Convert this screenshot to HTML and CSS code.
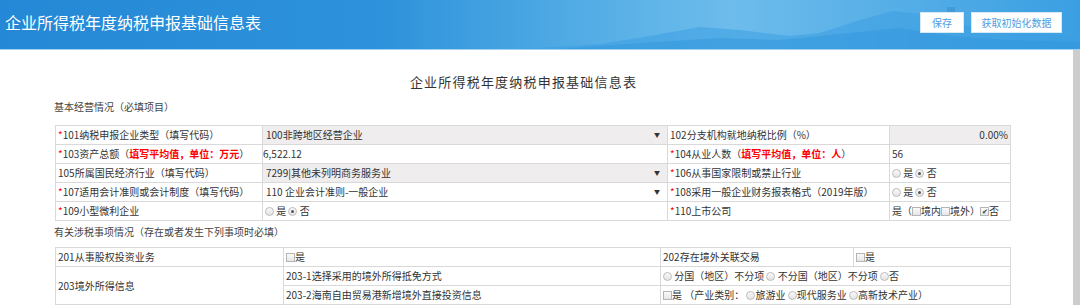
FILE: index.html
```html
<!DOCTYPE html>
<html lang="zh-CN">
<head>
    <meta charset="UTF-8">
    <title>企业所得税年度纳税申报基础信息表</title>
    <link rel="stylesheet" href="styles.css">
</head>
<body>
    <header class="topbar">
        <svg class="hills" viewBox="0 0 1080 49" preserveAspectRatio="none">
            <path d="M520 49 L600 44 L650 36 L700 27 L740 30 L790 36 L820 33 L860 20 L893 11 L920 14 L960 24 L1000 30 L1040 34 L1080 38 L1080 49 Z" fill="#3c9fe1" opacity="0.55"/>
            <path d="M560 49 L640 43 L720 38 L780 40 L840 34 L900 28 L950 36 L1010 40 L1080 42 L1080 49 Z" fill="#2f95dc" opacity="0.45"/>
            <rect x="947" y="7" width="8" height="6" fill="#3d8fcf" opacity="0.6"/>
        </svg>
        <h1 class="app-title">企业所得税年度纳税申报基础信息表</h1>
        <div class="actions">
            <button class="btn btn-save">保存</button>
            <button class="btn btn-init">获取初始化数据</button>
        </div>
    </header>

    <div class="body-wrap">
        <main class="content">
            <h2 class="form-title">企业所得税年度纳税申报基础信息表</h2>

            <div class="section-label first">基本经营情况（必填项目）</div>
            <table class="grid grid-basic">
                <colgroup>
                    <col style="width:207px">
                    <col style="width:405px">
                    <col style="width:222px">
                    <col style="width:121px">
                </colgroup>
                <tr>
                    <td><span class="req">*</span>101纳税申报企业类型（填写代码）</td>
                    <td class="select">100非跨地区经营企业<span class="arrow">▼</span></td>
                    <td>102分支机构就地纳税比例（%）</td>
                    <td class="readonly num">0.00%</td>
                </tr>
                <tr>
                    <td><span class="req">*</span>103资产总额（<b class="hint">填写平均值，单位：万元</b>）</td>
                    <td class="plain">6,522.12</td>
                    <td><span class="req">*</span>104从业人数（<b class="hint">填写平均值，单位：人</b>）</td>
                    <td>56</td>
                </tr>
                <tr>
                    <td>105所属国民经济行业（填写代码）</td>
                    <td class="select">7299|其他未列明商务服务业<span class="arrow">▼</span></td>
                    <td><span class="req">*</span>106从事国家限制或禁止行业</td>
                    <td><span class="radio"></span> 是 <span class="radio on"></span> 否</td>
                </tr>
                <tr>
                    <td><span class="req">*</span>107适用会计准则或会计制度（填写代码）</td>
                    <td class="select white">110 企业会计准则-一般企业<span class="arrow">▼</span></td>
                    <td><span class="req">*</span>108采用一般企业财务报表格式（2019年版）</td>
                    <td><span class="radio"></span> 是 <span class="radio on"></span> 否</td>
                </tr>
                <tr>
                    <td><span class="req">*</span>109小型微利企业</td>
                    <td><span class="radio"></span> 是 <span class="radio on"></span> 否</td>
                    <td><span class="req">*</span>110上市公司</td>
                    <td>是（<span class="check"></span>境内<span class="check"></span>境外）<span class="check on">✔</span>否</td>
                </tr>
            </table>

            <div class="section-label">有关涉税事项情况（存在或者发生下列事项时必填）</div>
            <table class="grid grid-tax">
                <colgroup>
                    <col style="width:228px">
                    <col style="width:377px">
                    <col style="width:193px">
                    <col style="width:157px">
                </colgroup>
                <tr>
                    <td>201从事股权投资业务</td>
                    <td><span class="check"></span>是</td>
                    <td>202存在境外关联交易</td>
                    <td><span class="check"></span>是</td>
                </tr>
                <tr>
                    <td rowspan="2">203境外所得信息</td>
                    <td>203-1选择采用的境外所得抵免方式</td>
                    <td colspan="2"><span class="radio"></span> 分国（地区）不分项 <span class="radio"></span> 不分国（地区）不分项 <span class="radio"></span>否</td>
                </tr>
                <tr>
                    <td>203-2海南自由贸易港新增境外直接投资信息</td>
                    <td colspan="2"><span class="check"></span>是 （产业类别： <span class="radio"></span>旅游业 <span class="radio"></span>现代服务业 <span class="radio"></span>高新技术产业）</td>
                </tr>
            </table>
        </main>
        <div class="scrollbar"></div>
    </div>
</body>
</html>
```

FILE: styles.css
```css
html, body {
    margin: 0;
    padding: 0;
}

body {
    width: 1080px;
    height: 305px;
    overflow: hidden;
    font-family: "Noto Sans CJK SC", "Noto Sans", sans-serif;
    color: #333;
    background-color: #fff;
}

/* top bar */
.topbar {
    position: relative;
    height: 50px;
    border-bottom: 1px solid #9fd2f3;
    display: flex;
    justify-content: space-between;
    align-items: flex-start;
    padding: 12px 18px 0 5px;
    box-sizing: border-box;
    background: linear-gradient(90deg, #2588d6 0%, #2d92db 35%, #5fb4e8 60%, #6dbcec 68%, #57afe7 82%, #3a9fe2 100%);
    overflow: hidden;
}

.hills {
    position: absolute;
    left: 0;
    top: 0;
    width: 1080px;
    height: 49px;
}

.app-title {
    position: relative;
    margin: 0;
    font-size: 16px;
    font-weight: normal;
    line-height: 21px;
    color: #fff;
}

.actions {
    position: relative;
    display: flex;
    gap: 7px;
}

.btn {
    height: 21px;
    padding: 0;
    border: 1px solid #d6e9f7;
    background-color: #fff;
    color: #4d9de0;
    font-family: inherit;
    font-size: 10px;
    line-height: 19px;
    cursor: pointer;
}

.btn-save {
    width: 44px;
}

.btn-init {
    width: 91px;
}

/* page body */
.body-wrap {
    display: flex;
    height: 255px;
}

.content {
    flex: 1;
    padding-left: 55px;
}

.scrollbar {
    width: 7px;
    background-color: #cdcdcd;
}

.form-title {
    width: 955px;
    margin: 24px 0 0;
    padding-right: 18px;
    box-sizing: border-box;
    text-align: center;
    font-size: 13px;
    font-weight: normal;
    letter-spacing: 1.2px;
    line-height: 16px;
    color: #333;
}

.section-label {
    margin: 4px 0 8px -1px;
    font-size: 10px;
    line-height: 14px;
    color: #444;
}

.section-label.first {
    margin-top: 10px;
    margin-bottom: 11px;
}

/* tables */
.grid {
    width: 955px;
    table-layout: fixed;
    border-collapse: collapse;
    font-size: 10px;
}

.grid td {
    height: 18px;
    padding: 0 2px;
    border: 1px solid #d9d9d9;
    line-height: 18px;
    white-space: nowrap;
    overflow: hidden;
    color: #333;
}

.grid td.select {
    padding-left: 3px;
    background-color: #efeded;
}

.grid td.select.white {
    background-color: #fff;
}

.grid td.plain {
    padding-left: 0;
}

.grid td.readonly {
    background-color: #efeded;
}

.grid td.num {
    text-align: right;
}

.arrow {
    float: right;
    margin-right: 5px;
    font-size: 6px;
    color: #333;
}

.req {
    color: #f00;
}

.hint {
    color: #f00;
    font-weight: bold;
}

.radio {
    display: inline-block;
    width: 7px;
    height: 7px;
    border: 1px solid #bdbdbd;
    border-radius: 50%;
    background: linear-gradient(#fafafa, #e3e3e3);
    vertical-align: -1px;
    position: relative;
}

.radio.on::after {
    content: "";
    position: absolute;
    left: 2px;
    top: 2px;
    width: 3px;
    height: 3px;
    border-radius: 50%;
    background-color: #555;
}

.check {
    display: inline-block;
    width: 7px;
    height: 7px;
    border: 1px solid #b5b5b5;
    background: linear-gradient(#fafafa, #e6e6e6);
    vertical-align: -1px;
    font-size: 7px;
    line-height: 7px;
    text-align: center;
    color: #333;
    overflow: hidden;
}
```
